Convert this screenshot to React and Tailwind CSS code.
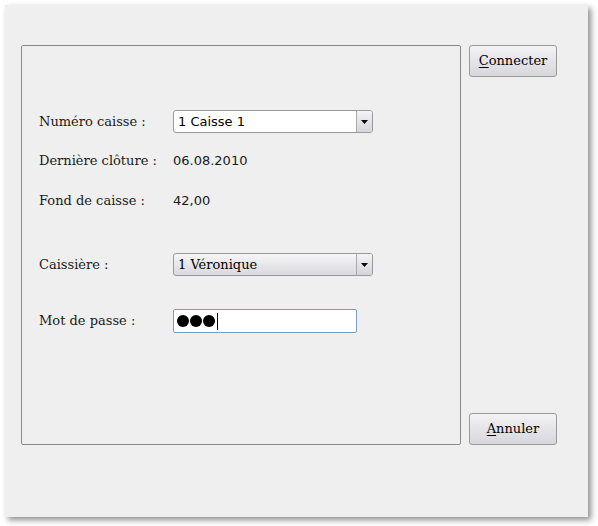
const serif = { fontFamily: '"DejaVu Serif", "Liberation Serif", serif' };
const sans = { fontFamily: '"DejaVu Sans", "Liberation Sans", sans-serif' };

const Arrow = () => (
  <div className="flex h-full w-[16px] items-center justify-center border-l border-[#a9a9a9] bg-gradient-to-b from-[#f4f4f6] to-[#d4d4da]">
    <svg width="7" height="4" viewBox="0 0 7 4">
      <path d="M0 0h7L3.5 4z" fill="#000" />
    </svg>
  </div>
);

const Combo = ({ value, editable }) => (
  <div
    className={`flex h-[23px] w-[200px] items-center overflow-hidden rounded-[3px] border border-[#9a9a9a] ${
      editable ? 'bg-white' : 'bg-gradient-to-b from-[#f6f6f8] to-[#d9d9de]'
    }`}
  >
    <span className="flex-1 pl-[4px] text-[13px] text-black" style={editable ? sans : serif}>
      {value}
    </span>
    <Arrow />
  </div>
);

const Row = ({ label, className = '', children }) => (
  <div className={`flex h-[23px] items-center ${className}`}>
    <span className="w-[134px] text-[13px] text-[#1a1a1a]" style={serif}>
      {label}
    </span>
    {children}
  </div>
);

const Button = ({ mnemonic, rest }) => (
  <button
    className="h-[32px] w-[88px] rounded-[3px] border border-[#9a9a9a] bg-gradient-to-b from-[#f3f3f5] to-[#d6d6dc] text-[13px] text-black"
    style={serif}
  >
    <span className="underline underline-offset-2">{mnemonic}</span>
    {rest}
  </button>
);

export default function App() {
  return (
    <div className="h-[526px] w-[598px] bg-white pl-[5px] pt-[5px]">
      <div className="flex h-[512px] w-[583px] gap-[8px] bg-[#efefef] pl-[16px] pt-[40px] shadow-[3px_3px_6px_rgba(0,0,0,0.45)]">
        <div className="h-[400px] w-[440px] rounded-[2px] border border-[#8a8a8a] pl-[17px] pt-[64px]">
          <Row label="Numéro caisse :">
            <Combo value="1 Caisse 1" editable />
          </Row>
          <Row label="Dernière clôture :" className="mt-[16px]">
            <span className="text-[13px] text-[#1a1a1a]" style={sans}>
              06.08.2010
            </span>
          </Row>
          <Row label="Fond de caisse :" className="mt-[17px]">
            <span className="text-[13px] text-[#1a1a1a]" style={sans}>
              42,00
            </span>
          </Row>
          <Row label="Caissière :" className="mt-[41px]">
            <Combo value="1 Véronique" />
          </Row>
          <Row label="Mot de passe :" className="mt-[33px] h-[24px]">
            <div className="flex h-[24px] w-[184px] items-center gap-[1px] rounded-[2px] border border-[#7b9cc2] bg-white pl-[3px]">
              <span className="h-[12px] w-[12px] rounded-full bg-black" />
              <span className="h-[12px] w-[12px] rounded-full bg-black" />
              <span className="h-[12px] w-[12px] rounded-full bg-black" />
              <span className="ml-[1px] h-[17px] w-[1px] bg-black" />
            </div>
          </Row>
        </div>
        <div className="flex h-[400px] flex-col justify-between">
          <Button mnemonic="C" rest="onnecter" />
          <Button mnemonic="A" rest="nnuler" />
        </div>
      </div>
    </div>
  );
}
